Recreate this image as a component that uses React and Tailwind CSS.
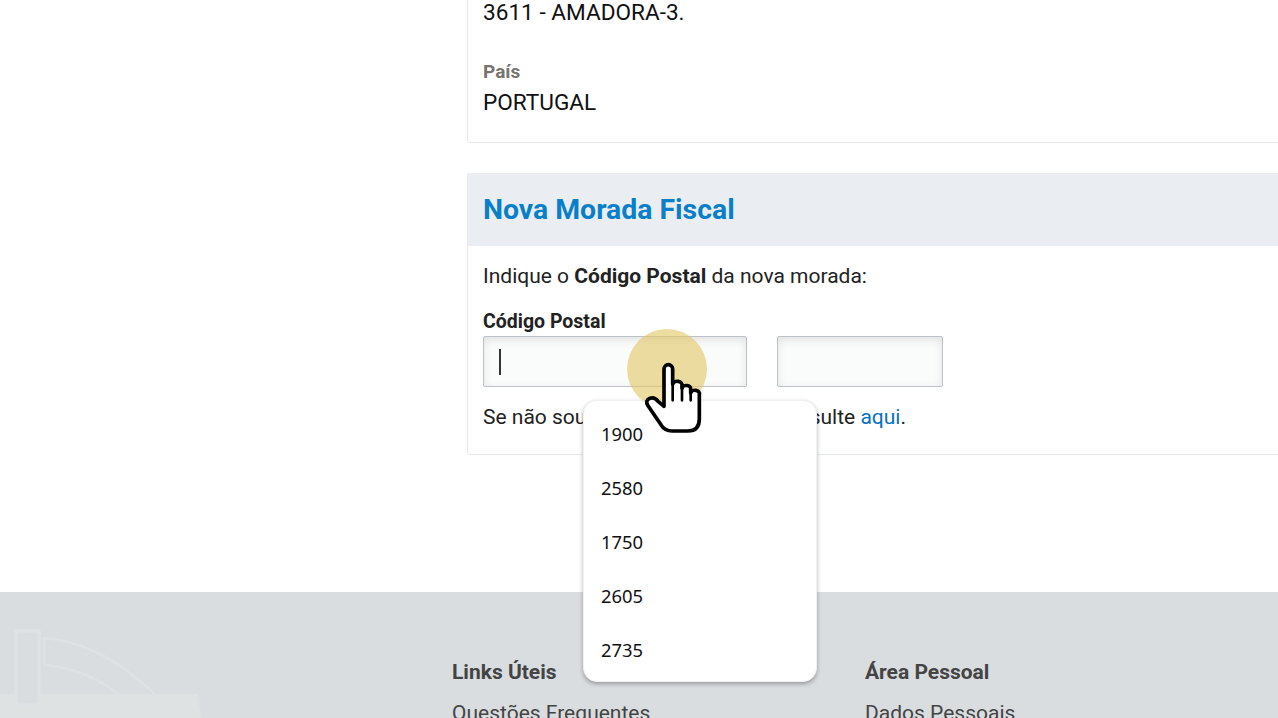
import React from 'react';

const roboto = "font-['Roboto',sans-serif]";

const opcoes = ['1900', '2580', '1750', '2605', '2735'];

// mao do cursor, coordenadas tiradas do zoom
const HandCursor = () => (
    <svg viewBox="0 0 300 345" className="absolute left-[620px] top-[325px] w-[100px] h-[115px]">
        <path
            d="M132 244 V132 a13 13 0 0 1 26 0 V178 a14 11 0 0 1 28 4 V190 a13 10 0 0 1 26 3 V204 a13 10 0 0 1 26 4 V282 Q238 318 204 318 H156 Q134 318 122 298 L84 242 Q74 226 90 220 Q104 215 115 230 Z"
            fill="#fff"
            stroke="#000"
            strokeWidth="11"
            strokeLinejoin="round"
        />
        <path d="M158 178 V226 M186 184 V226 M212 196 V226" fill="none" stroke="#000" strokeWidth="8" strokeLinecap="round" />
    </svg>
);

const FooterLogo = () => (
    <svg viewBox="0 0 300 126" className="absolute left-0 top-0 w-[300px] h-[126px]">
        <path d="M0 102 H198 L201 126 H0 Z" fill="#dee2e3" />
        <rect x="16" y="39" width="23" height="74" fill="#dadde0" stroke="#dfe2e4" strokeWidth="3" />
        <path d="M44 46 C90 50 130 73 178 126 M44 73 C80 76 110 90 145 126 M44 46 V73" fill="none" stroke="#dfe2e4" strokeWidth="2.5" />
    </svg>
);

const App = () => {
    return (
        <div className={`relative w-[1278px] h-[718px] overflow-hidden bg-white ${roboto}`}>
            <main className="h-[592px] pl-[467px]">
                <section className="w-[830px] h-[143px] border-x border-b border-[#e6e9ec] rounded-b-[3px] px-[15px] text-[22.6px] text-[#111]">
                    <p className="leading-[26px]">3611 - AMADORA-3.</p>
                    <h4 className="mt-[34px] text-[19px] leading-[24px] font-bold text-[#77736f]">País</h4>
                    <p className="mt-[4px] leading-[30px]">PORTUGAL</p>
                </section>

                <section className="w-[830px] mt-[30px] h-[282px] border-x border-b border-[#e6e9ec] rounded-[3px]">
                    <header className="h-[73px] flex items-center px-[16px] pt-[2px] bg-[#eaeef2] -mx-px">
                        <h2 className="text-[28.4px] font-bold text-[#0a7fc9]">Nova Morada Fiscal</h2>
                    </header>
                    <div className="px-[15px] text-[#222] text-[21px] leading-[28px]">
                        <p className="mt-[16px]">Indique o <b>Código Postal</b> da nova morada:</p>
                        <label className="block mt-[18px] font-bold text-[19.5px] leading-[28px]">Código Postal</label>
                        <div className="flex gap-[30px]">
                            <div className="w-[264px] h-[51px] flex items-center px-[15px] rounded-[2px] border border-[#bcc3c8] bg-[#fafbfb] shadow-[inset_0_3px_9px_rgba(0,0,0,0.1)]">
                                <span className="w-[2px] h-[26px] bg-[#333]"></span>
                            </div>
                            <div className="w-[166px] h-[51px] rounded-[2px] border border-[#bcc3c8] bg-[#fafbfb] shadow-[inset_0_3px_9px_rgba(0,0,0,0.1)]"></div>
                        </div>
                        <p className="mt-[16px]">
                            Se não souber o código postal, consulte <a className="text-[#0a6fc2]">aqui</a>.
                        </p>
                    </div>
                </section>
            </main>

            <footer className="relative h-[126px] bg-[#dadde0] text-[#444]">
                <FooterLogo />
                <div className="relative flex pl-[452px] pt-[66px] text-[21px]">
                    <div className="w-[413px]">
                        <h5 className="font-bold leading-[28px]">Links Úteis</h5>
                        <p className="mt-[13px] leading-[28px]">Questões Frequentes</p>
                    </div>
                    <div>
                        <h5 className="font-bold leading-[28px]">Área Pessoal</h5>
                        <p className="mt-[13px] leading-[28px]">Dados Pessoais</p>
                    </div>
                </div>
            </footer>

            <ul className="absolute left-[583px] top-[400px] w-[234px] h-[282px] py-[6px] bg-white rounded-[14px] border border-[#f0f1f2] shadow-[0_2px_4px_rgba(0,0,0,0.3)] font-['Noto_Sans',sans-serif] text-[18.4px] text-[#111]">
                {opcoes.map(op => (
                    <li key={op} className="h-[54px] flex items-center pl-[17px]">{op}</li>
                ))}
            </ul>

            <div className="absolute left-[627px] top-[329px] w-[80px] h-[80px] rounded-full bg-[#e3c763]/60"></div>
            <HandCursor />
        </div>
    );
};

export default App;
